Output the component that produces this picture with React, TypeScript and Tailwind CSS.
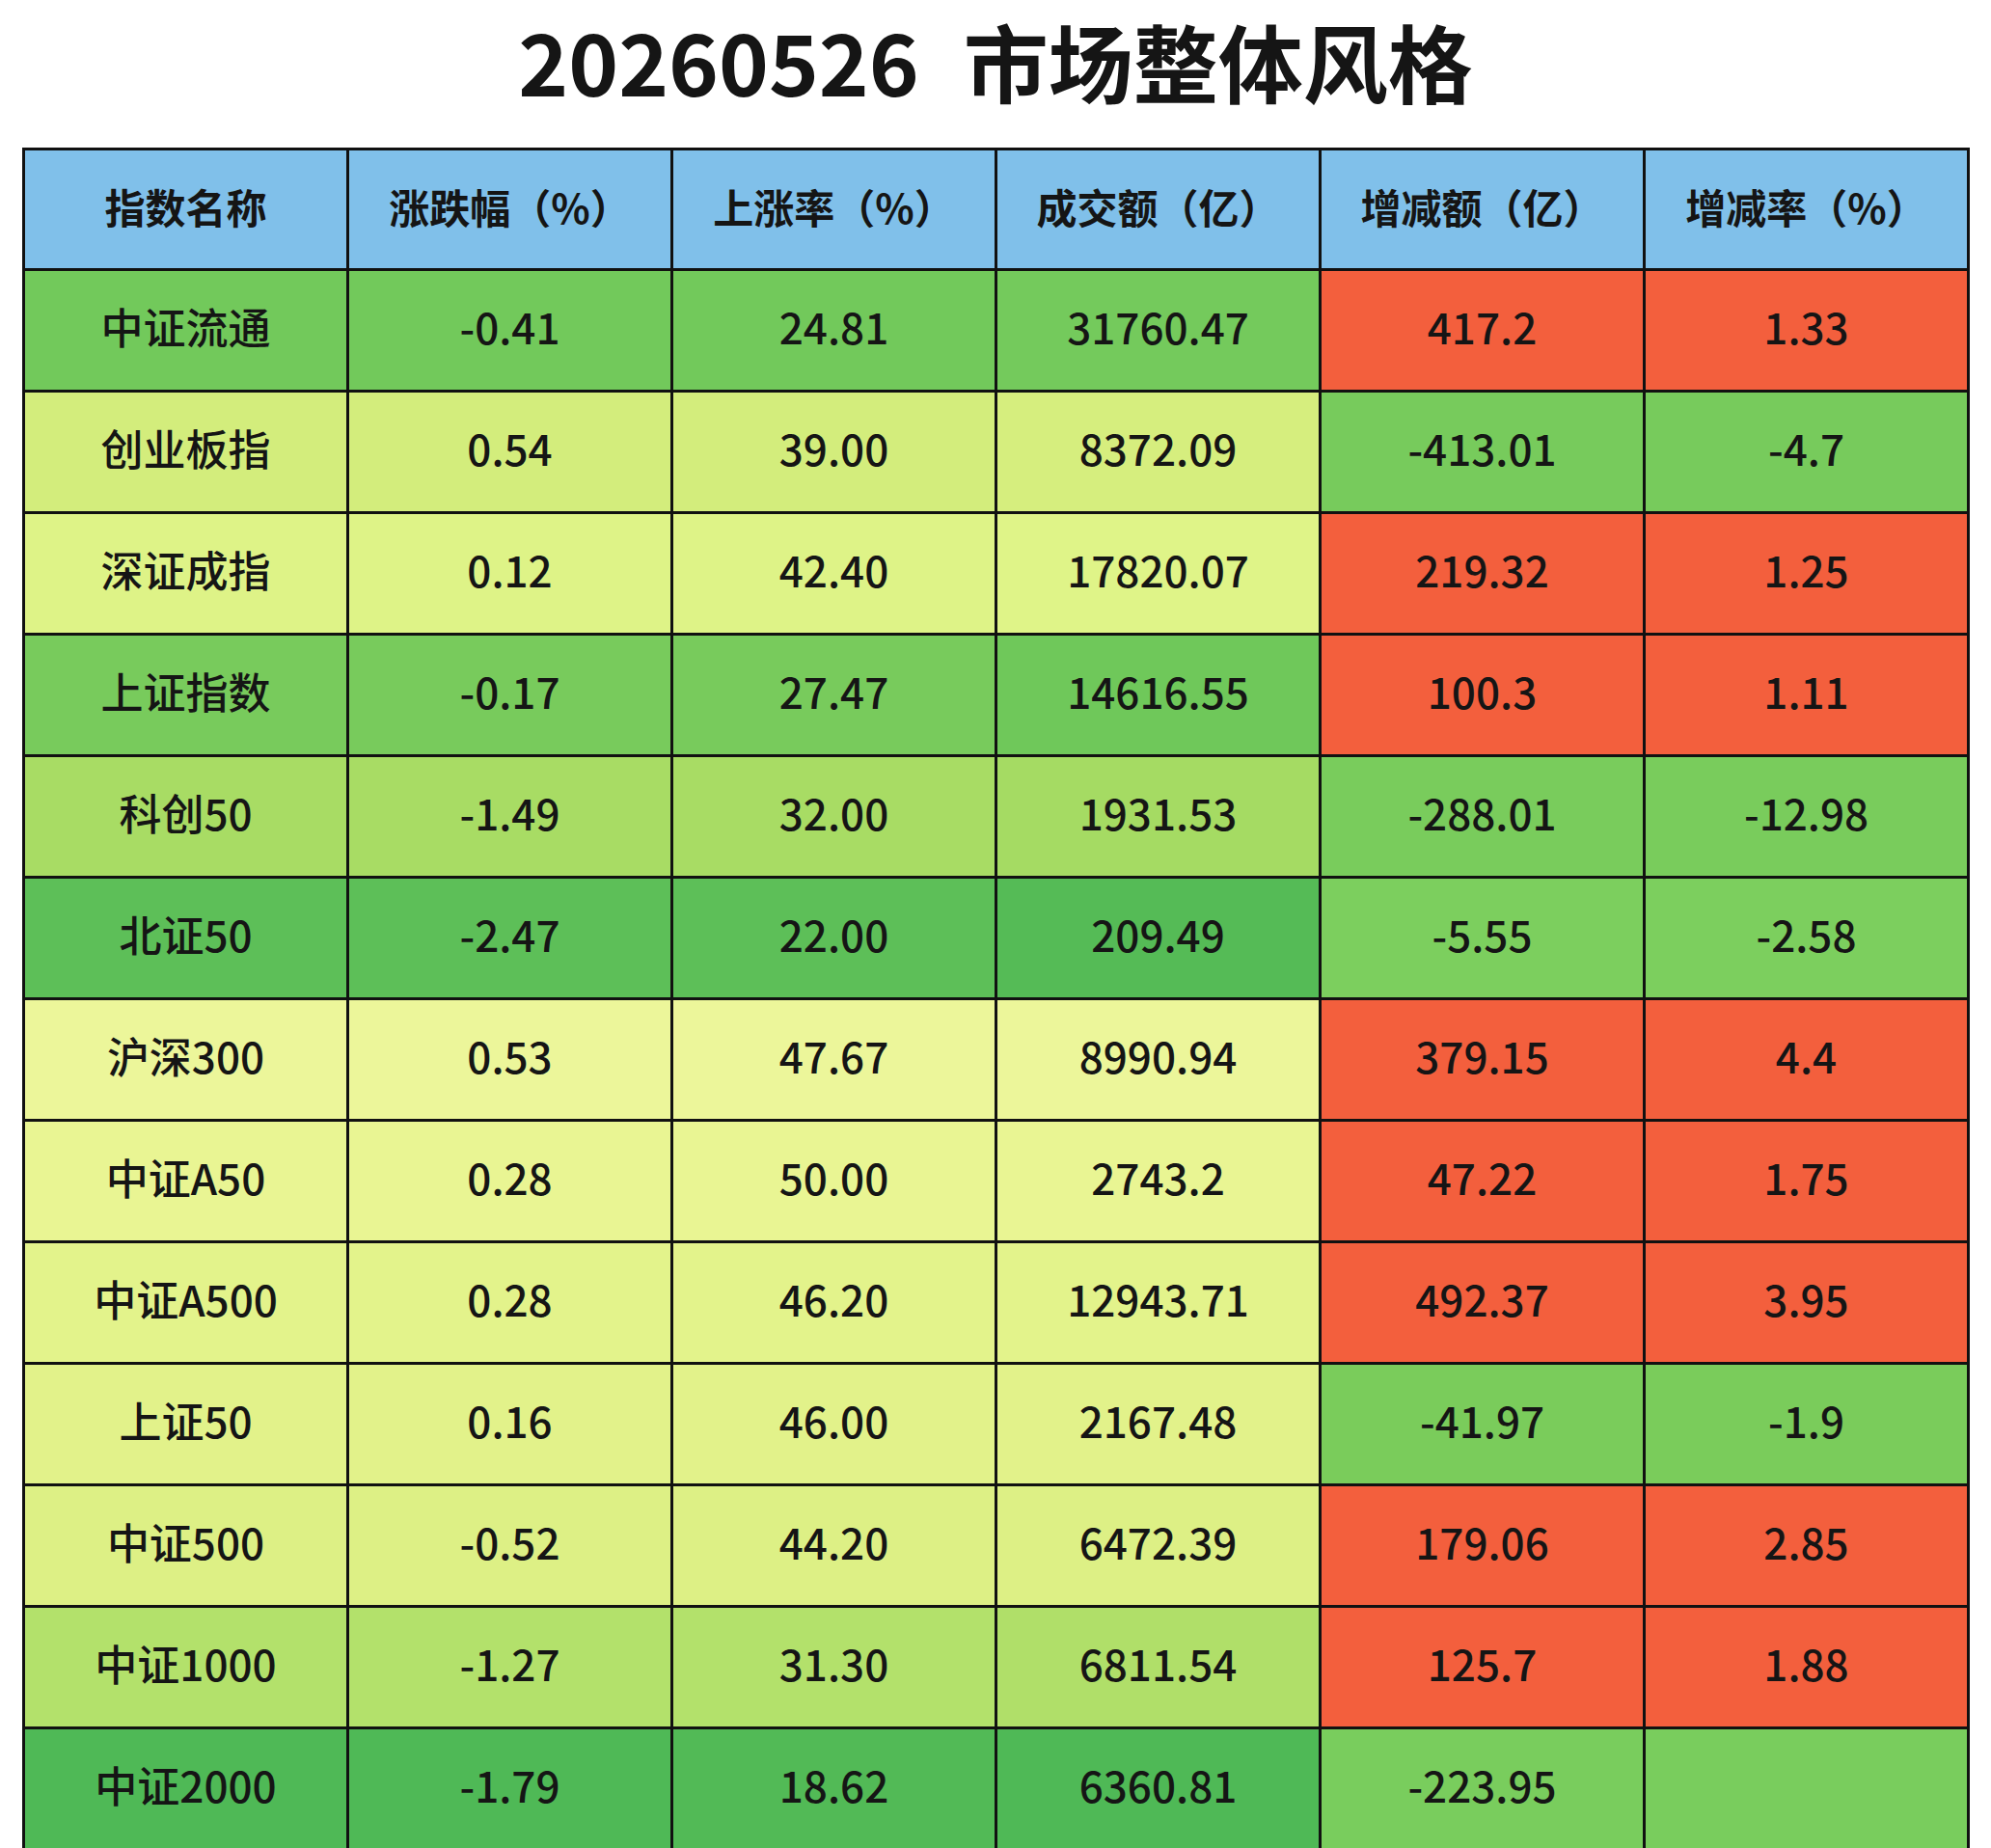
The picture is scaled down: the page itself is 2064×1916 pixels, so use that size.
const RED = 'bg-[#f35f3d]';

type Row = {
    name: string;
    values: string[];
    colors: string[];
};

const rows: Row[] = [
    { name: '中证流通', values: ['-0.41', '24.81', '31760.47', '417.2', '1.33'], colors: ['bg-[#72c95b]', 'bg-[#72c95b]', 'bg-[#72c95b]', 'bg-[#74ca5c]', RED, RED] },
    { name: '创业板指', values: ['0.54', '39.00', '8372.09', '-413.01', '-4.7'], colors: ['bg-[#d3ed7c]', 'bg-[#d3ed7c]', 'bg-[#d3ed7c]', 'bg-[#d6ee7e]', 'bg-[#77cb5c]', 'bg-[#77cb5c]'] },
    { name: '深证成指', values: ['0.12', '42.40', '17820.07', '219.32', '1.25'], colors: ['bg-[#def387]', 'bg-[#def387]', 'bg-[#def387]', 'bg-[#dff488]', RED, RED] },
    { name: '上证指数', values: ['-0.17', '27.47', '14616.55', '100.3', '1.11'], colors: ['bg-[#78cb5c]', 'bg-[#78cb5c]', 'bg-[#78cb5c]', 'bg-[#6fc85a]', RED, RED] },
    { name: '科创50', values: ['-1.49', '32.00', '1931.53', '-288.01', '-12.98'], colors: ['bg-[#a8dc64]', 'bg-[#a8dc64]', 'bg-[#a8dc64]', 'bg-[#a5db63]', 'bg-[#79cc5c]', 'bg-[#79cc5c]'] },
    { name: '北证50', values: ['-2.47', '22.00', '209.49', '-5.55', '-2.58'], colors: ['bg-[#5dbf58]', 'bg-[#5dbf58]', 'bg-[#5dbf58]', 'bg-[#55bb56]', 'bg-[#7ccf5e]', 'bg-[#7ccf5e]'] },
    { name: '沪深300', values: ['0.53', '47.67', '8990.94', '379.15', '4.4'], colors: ['bg-[#ecf69a]', 'bg-[#ecf69a]', 'bg-[#ecf69a]', 'bg-[#ecf69a]', RED, RED] },
    { name: '中证A50', values: ['0.28', '50.00', '2743.2', '47.22', '1.75'], colors: ['bg-[#e9f593]', 'bg-[#e9f593]', 'bg-[#e9f593]', 'bg-[#e9f593]', RED, RED] },
    { name: '中证A500', values: ['0.28', '46.20', '12943.71', '492.37', '3.95'], colors: ['bg-[#e3f38b]', 'bg-[#e3f38b]', 'bg-[#e3f38b]', 'bg-[#e3f38b]', RED, RED] },
    { name: '上证50', values: ['0.16', '46.00', '2167.48', '-41.97', '-1.9'], colors: ['bg-[#e2f28a]', 'bg-[#e2f28a]', 'bg-[#e2f28a]', 'bg-[#e2f28a]', 'bg-[#7acc5b]', 'bg-[#7acc5b]'] },
    { name: '中证500', values: ['-0.52', '44.20', '6472.39', '179.06', '2.85'], colors: ['bg-[#ddf085]', 'bg-[#ddf085]', 'bg-[#ddf085]', 'bg-[#ddf085]', RED, RED] },
    { name: '中证1000', values: ['-1.27', '31.30', '6811.54', '125.7', '1.88'], colors: ['bg-[#b3e16b]', 'bg-[#b3e16b]', 'bg-[#b3e16b]', 'bg-[#b0df69]', RED, RED] },
    { name: '中证2000', values: ['-1.79', '18.62', '6360.81', '-223.95', ''], colors: ['bg-[#4fb956]', 'bg-[#4fb956]', 'bg-[#52ba56]', 'bg-[#4fb956]', 'bg-[#79cd5d]', 'bg-[#79cd5d]'] },
];

const headers = ['指数名称', '涨跌幅（%）', '上涨率（%）', '成交额（亿）', '增减额（亿）', '增减率（%）'];

export default function App() {
    return (
        <div className="h-[1916px] w-[2064px] overflow-hidden bg-white text-[#151515] font-['Noto_Sans_CJK_SC','Noto_Sans',sans-serif]">
            {/* 标题 */}
            <div className="h-[153px] flex justify-center items-start">
                <h1 className="flex gap-[46px] text-[88px] leading-[1.4] font-bold">
                    <span>20260526</span>
                    <span>市场整体风格</span>
                </h1>
            </div>

            <div className="mx-[23px] w-[2019px] bg-[#111] p-[3px] grid grid-cols-6 gap-[3px]">
                {headers.map((h) => (
                    <div key={h} className="h-[122px] pb-[8px] bg-[#80c0ea] flex items-center justify-center text-[42px] font-semibold">
                        {h}
                    </div>
                ))}

                {rows.map((row) => (
                    <Cells key={row.name} row={row} />
                ))}
            </div>
        </div>
    );
}

function Cells({ row }: { row: Row }) {
    const cells = [row.name, ...row.values];

    return (
        <>
            {cells.map((text, i) => (
                <div
                    key={i}
                    className={`h-[123px] pb-[10px] flex items-center justify-center text-[44px] font-medium ${row.colors[i]}`}
                >
                    {text}
                </div>
            ))}
        </>
    );
}
